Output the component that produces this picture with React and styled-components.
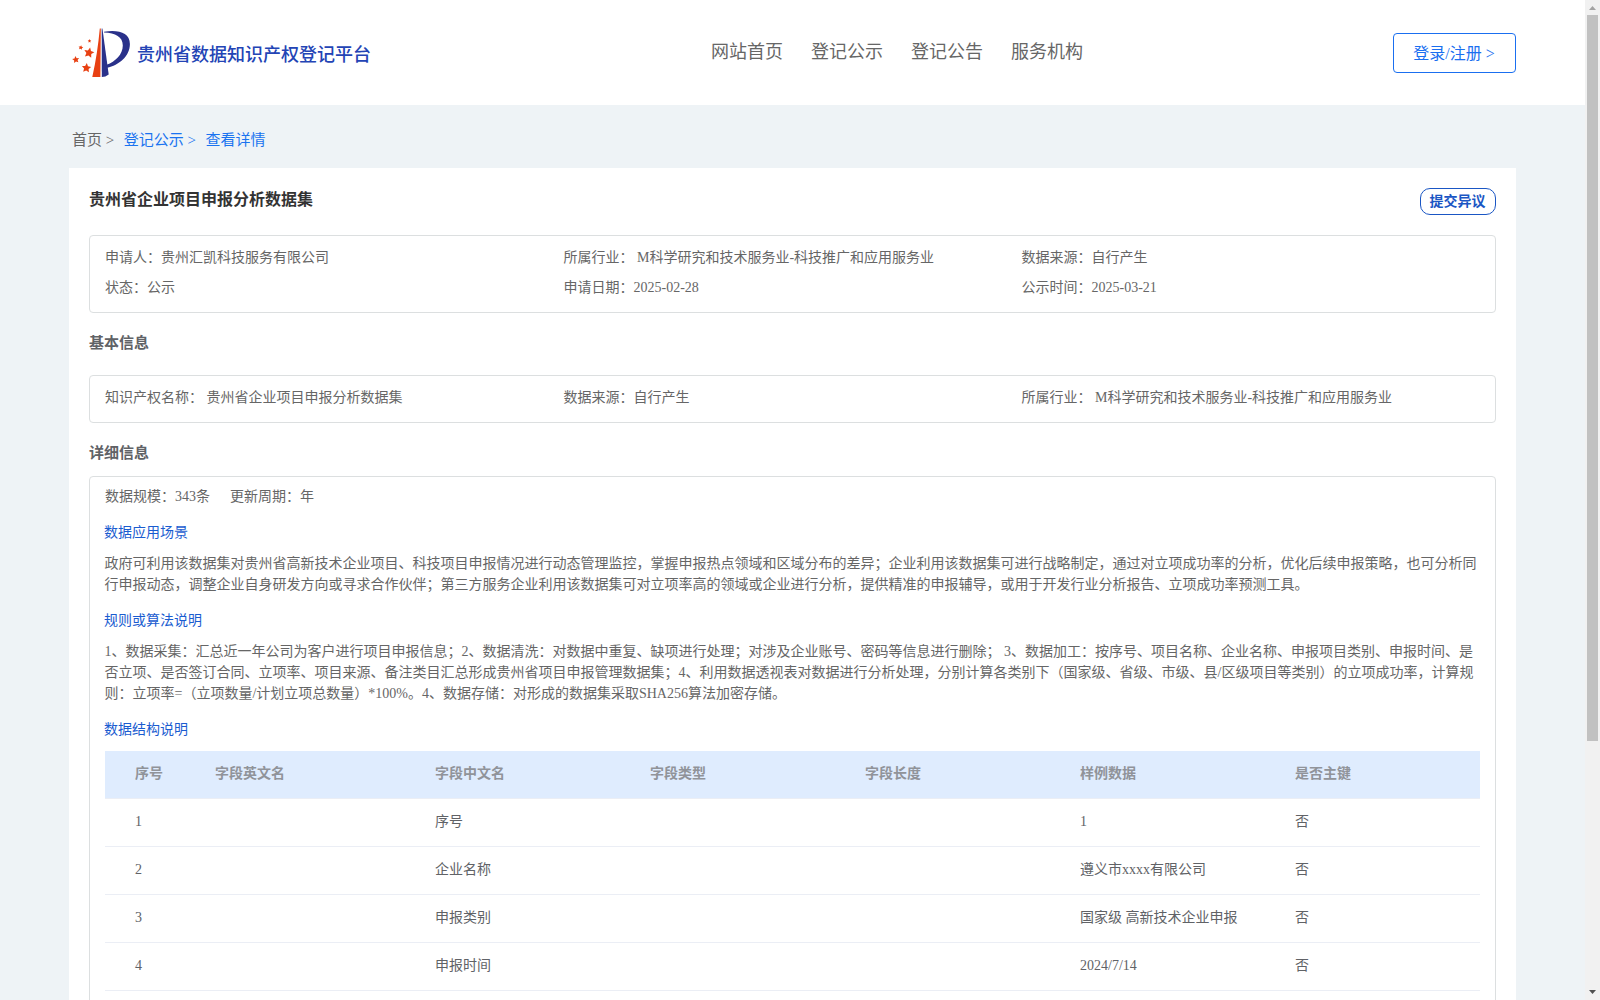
import React from 'react';
import styled, { createGlobalStyle } from 'styled-components';

const GlobalStyle = createGlobalStyle`
  * {
    box-sizing: border-box;
  }

  body {
    margin: 0;
    overflow: hidden;
    font-family: 'Liberation Serif', 'Noto Sans CJK SC', serif;
    font-size: 14px;
    color: #666;
  }
`;

const Window = styled.div`
  display: flex;
  height: 1000px;
  overflow: hidden;
`;

const Page = styled.div`
  flex: 1;
  height: 100%;
  overflow: hidden;
  background-color: #eef3f6;
`;

const Header = styled.header`
  display: flex;
  align-items: center;
  justify-content: space-between;
  height: 105px;
  padding: 0 69px;
  background-color: #fff;
`;

const Brand = styled.div`
  display: flex;
  align-items: center;
  width: 642px;
`;

const LogoMark = styled.svg`
  width: 66px;
  height: 58px;
  margin: 1px 3px 0 -1px;
`;

const BrandName = styled.h1`
  margin: 5px 0 0;
  font-size: 18px;
  line-height: 26px;
  font-weight: 500;
  color: #2344b5;
`;

const Nav = styled.nav`
  display: flex;
  flex: 1;
  gap: 28px;
  padding-bottom: 1px;
`;

const NavItem = styled.a`
  font-size: 18px;
  line-height: 26px;
  color: #666;
  cursor: pointer;
`;

const LoginButton = styled.button`
  width: 123px;
  height: 40px;
  padding: 0 1px 2px 0;
  border: 1px solid #1a6ff0;
  border-radius: 4px;
  background-color: #fff;
  font-family: inherit;
  font-size: 16px;
  color: #1a6ff0;
  cursor: pointer;
`;

const Breadcrumb = styled.div`
  display: flex;
  gap: 9.5px;
  height: 63px;
  padding: 25px 72px 0;
  font-size: 15px;
  line-height: 20px;
`;

const Crumb = styled.span`
  color: ${({ $active }) => ($active ? '#1a73f0' : '#666')};
`;

const Card = styled.main`
  width: 1447px;
  height: 900px;
  margin-left: 69px;
  padding: 20px 20px 0;
  background-color: #fff;
`;

const CardHead = styled.div`
  display: flex;
  align-items: flex-start;
  justify-content: space-between;
  height: 47px;
`;

const Title = styled.h2`
  margin: 0;
  font-size: 16px;
  line-height: 24px;
  font-weight: 700;
  color: #333;
`;

const ObjectionButton = styled.button`
  width: 76px;
  height: 27px;
  padding: 0 1px 1px 0;
  border: 1px solid #1a56c4;
  border-radius: 10px;
  background-color: #fff;
  font-family: inherit;
  font-size: 14px;
  line-height: 23px;
  font-weight: 700;
  color: #1a56c4;
  cursor: pointer;
`;

const InfoBox = styled.section`
  display: grid;
  grid-template-columns: 458.5px 458px 1fr;
  grid-auto-rows: 30px;
  padding: 7px 15px 9px;
  border: 1px solid #dcdfe0;
  border-radius: 4px;
`;

const InfoItem = styled.div`
  line-height: 30px;
  white-space: pre;
`;

const SectionTitle = styled.h3`
  height: ${({ $height }) => $height}px;
  margin: 0;
  padding-top: 20px;
  font-size: 15px;
  line-height: 21px;
  font-weight: 700;
  color: #606266;
`;

const DetailBox = styled.section`
  height: 600px;
  padding: 10px 15px 0;
  border: 1px solid #dcdfe0;
  border-radius: 4px;
`;

const Summary = styled.div`
  display: flex;
  gap: 20px;
  line-height: 20px;
`;

const SubTitle = styled.h4`
  margin: 15px 0 0 -1px;
  font-size: 14px;
  line-height: 21px;
  font-weight: 400;
  color: #1a5cd0;
`;

const Paragraph = styled.p`
  margin: 10px -4px 0 -0.5px;
  line-height: 21px;
`;

const Line = styled.span`
  display: block;
  white-space: nowrap;
`;

const Table = styled.div`
  margin-top: 11px;
`;

const Row = styled.div`
  display: grid;
  grid-template-columns: 80px 220px 215px 215px 215px 215px 1fr;
  align-items: center;
  height: 48px;
  padding: 0 0 3px 30px;
  border-bottom: 1px solid #ebeef5;
  background-color: ${({ $head }) => ($head ? '#dfecfe' : '#fff')};
  color: ${({ $head }) => ($head ? '#909399' : '#606266')};
  font-weight: ${({ $head }) => ($head ? 700 : 400)};
`;

const Cell = styled.span`
  line-height: 23px;
  white-space: nowrap;
`;

const ScrollTrack = styled.div`
  display: flex;
  flex-direction: column;
  align-items: center;
  width: 15px;
  height: 100%;
  background-color: #f1f1f1;
`;

const ScrollThumb = styled.div`
  width: 11px;
  height: 726px;
  margin-bottom: auto;
  background-color: #c1c1c1;
`;

const ScrollArrow = styled.svg`
  width: 15px;
  height: 15px;
`;

const navItems = ['网站首页', '登记公示', '登记公告', '服务机构'];

const applyInfo = [
  '申请人：贵州汇凯科技服务有限公司',
  '所属行业： M科学研究和技术服务业-科技推广和应用服务业',
  '数据来源：自行产生',
  '状态：公示',
  '申请日期：2025-02-28',
  '公示时间：2025-03-21',
];

const basicInfo = [
  '知识产权名称： 贵州省企业项目申报分析数据集',
  '数据来源：自行产生',
  '所属行业： M科学研究和技术服务业-科技推广和应用服务业',
];

const sceneLines = [
  '政府可利用该数据集对贵州省高新技术企业项目、科技项目申报情况进行动态管理监控，掌握申报热点领域和区域分布的差异；企业利用该数据集可进行战略制定，通过对立项成功率的分析，优化后续申报策略，也可分析同',
  '行申报动态，调整企业自身研发方向或寻求合作伙伴；第三方服务企业利用该数据集可对立项率高的领域或企业进行分析，提供精准的申报辅导，或用于开发行业分析报告、立项成功率预测工具。',
];

const ruleLines = [
  '1、数据采集：汇总近一年公司为客户进行项目申报信息；2、数据清洗：对数据中重复、缺项进行处理；对涉及企业账号、密码等信息进行删除； 3、数据加工：按序号、项目名称、企业名称、申报项目类别、申报时间、是',
  '否立项、是否签订合同、立项率、项目来源、备注类目汇总形成贵州省项目申报管理数据集；4、利用数据透视表对数据进行分析处理，分别计算各类别下（国家级、省级、市级、县/区级项目等类别）的立项成功率，计算规',
  '则：立项率=（立项数量/计划立项总数量）*100%。4、数据存储：对形成的数据集采取SHA256算法加密存储。',
];

const columns = ['序号', '字段英文名', '字段中文名', '字段类型', '字段长度', '样例数据', '是否主键'];

const rows = [
  ['1', '', '序号', '', '', '1', '否'],
  ['2', '', '企业名称', '', '', '遵义市xxxx有限公司', '否'],
  ['3', '', '申报类别', '', '', '国家级 高新技术企业申报', '否'],
  ['4', '', '申报时间', '', '', '2024/7/14', '否'],
];

const STAR = 'M0 -1 L.29 -.38 L.95 -.31 L.46 .15 L.59 .81 L0 .49 L-.59 .81 L-.46 .15 L-.95 -.31 L-.29 -.38Z';

const Logo = () => (
  <LogoMark viewBox="68 24 66 58">
    <path d="M99.8 28.5 H100.8 L100.4 77 H92.3 Q97.5 54 99.8 28.5Z" fill="#e84012" />
    <path d="M101.7 28.5 H102.4 L108.7 74.5 Q105.5 77 101.8 77Z" fill="#2a318a" />
    <path
      d="M104 31.8 C118 29.5 129.9 32.5 129.9 44 C129.9 56.5 119 65 107 67.8 L106.6 64.8 C115.5 61.5 122.8 54.5 122.8 45.5 C122.8 37 115.5 33 104 32.6Z"
      fill="#2a318a"
    />
    <g fill="#e84012">
      <path d={STAR} transform="translate(89 52.8) rotate(12) scale(5.4)" />
      <path d={STAR} transform="translate(86.4 68) rotate(5) scale(4.9)" />
      <path d={STAR} transform="translate(75.8 59.7) rotate(-8) scale(3.7)" />
      <path d={STAR} transform="translate(80.8 47.6) rotate(10) scale(2.5)" />
      <path d={STAR} transform="translate(89.5 41) scale(1.9)" />
    </g>
  </LogoMark>
);

const App = () => {
  return (
    <>
      <GlobalStyle />
      <Window>
        <Page>
          <Header>
            <Brand>
              <Logo />
              <BrandName>贵州省数据知识产权登记平台</BrandName>
            </Brand>
            <Nav>
              {navItems.map((item) => (
                <NavItem key={item}>{item}</NavItem>
              ))}
            </Nav>
            <LoginButton type="button">登录/注册 &gt;</LoginButton>
          </Header>

          <Breadcrumb>
            <Crumb>首页 &gt;</Crumb>
            <Crumb $active>登记公示 &gt;</Crumb>
            <Crumb $active>查看详情</Crumb>
          </Breadcrumb>

          <Card>
            <CardHead>
              <Title>贵州省企业项目申报分析数据集</Title>
              <ObjectionButton type="button">提交异议</ObjectionButton>
            </CardHead>
            <InfoBox>
              {applyInfo.map((text) => (
                <InfoItem key={text}>{text}</InfoItem>
              ))}
            </InfoBox>

            <SectionTitle $height={62}>基本信息</SectionTitle>
            <InfoBox>
              {basicInfo.map((text) => (
                <InfoItem key={text}>{text}</InfoItem>
              ))}
            </InfoBox>

            <SectionTitle $height={53}>详细信息</SectionTitle>
            <DetailBox>
              <Summary>
                <span>数据规模：343条</span>
                <span>更新周期：年</span>
              </Summary>

              <SubTitle>数据应用场景</SubTitle>
              <Paragraph>
                {sceneLines.map((line) => (
                  <Line key={line}>{line}</Line>
                ))}
              </Paragraph>

              <SubTitle>规则或算法说明</SubTitle>
              <Paragraph>
                {ruleLines.map((line) => (
                  <Line key={line}>{line}</Line>
                ))}
              </Paragraph>

              <SubTitle>数据结构说明</SubTitle>
              <Table>
                <Row $head>
                  {columns.map((name) => (
                    <Cell key={name}>{name}</Cell>
                  ))}
                </Row>
                {rows.map((row) => (
                  <Row key={row[0]}>
                    {row.map((value, i) => (
                      <Cell key={columns[i]}>{value}</Cell>
                    ))}
                  </Row>
                ))}
              </Table>
            </DetailBox>
          </Card>
        </Page>

        <ScrollTrack>
          <ScrollArrow viewBox="0 0 15 15">
            <path d="M4 10 L7.5 6 L11 10Z" fill="#a3a3a3" />
          </ScrollArrow>
          <ScrollThumb />
          <ScrollArrow viewBox="0 0 15 15">
            <path d="M4 5 L7.5 9 L11 5Z" fill="#505050" />
          </ScrollArrow>
        </ScrollTrack>
      </Window>
    </>
  );
};

export default App;
